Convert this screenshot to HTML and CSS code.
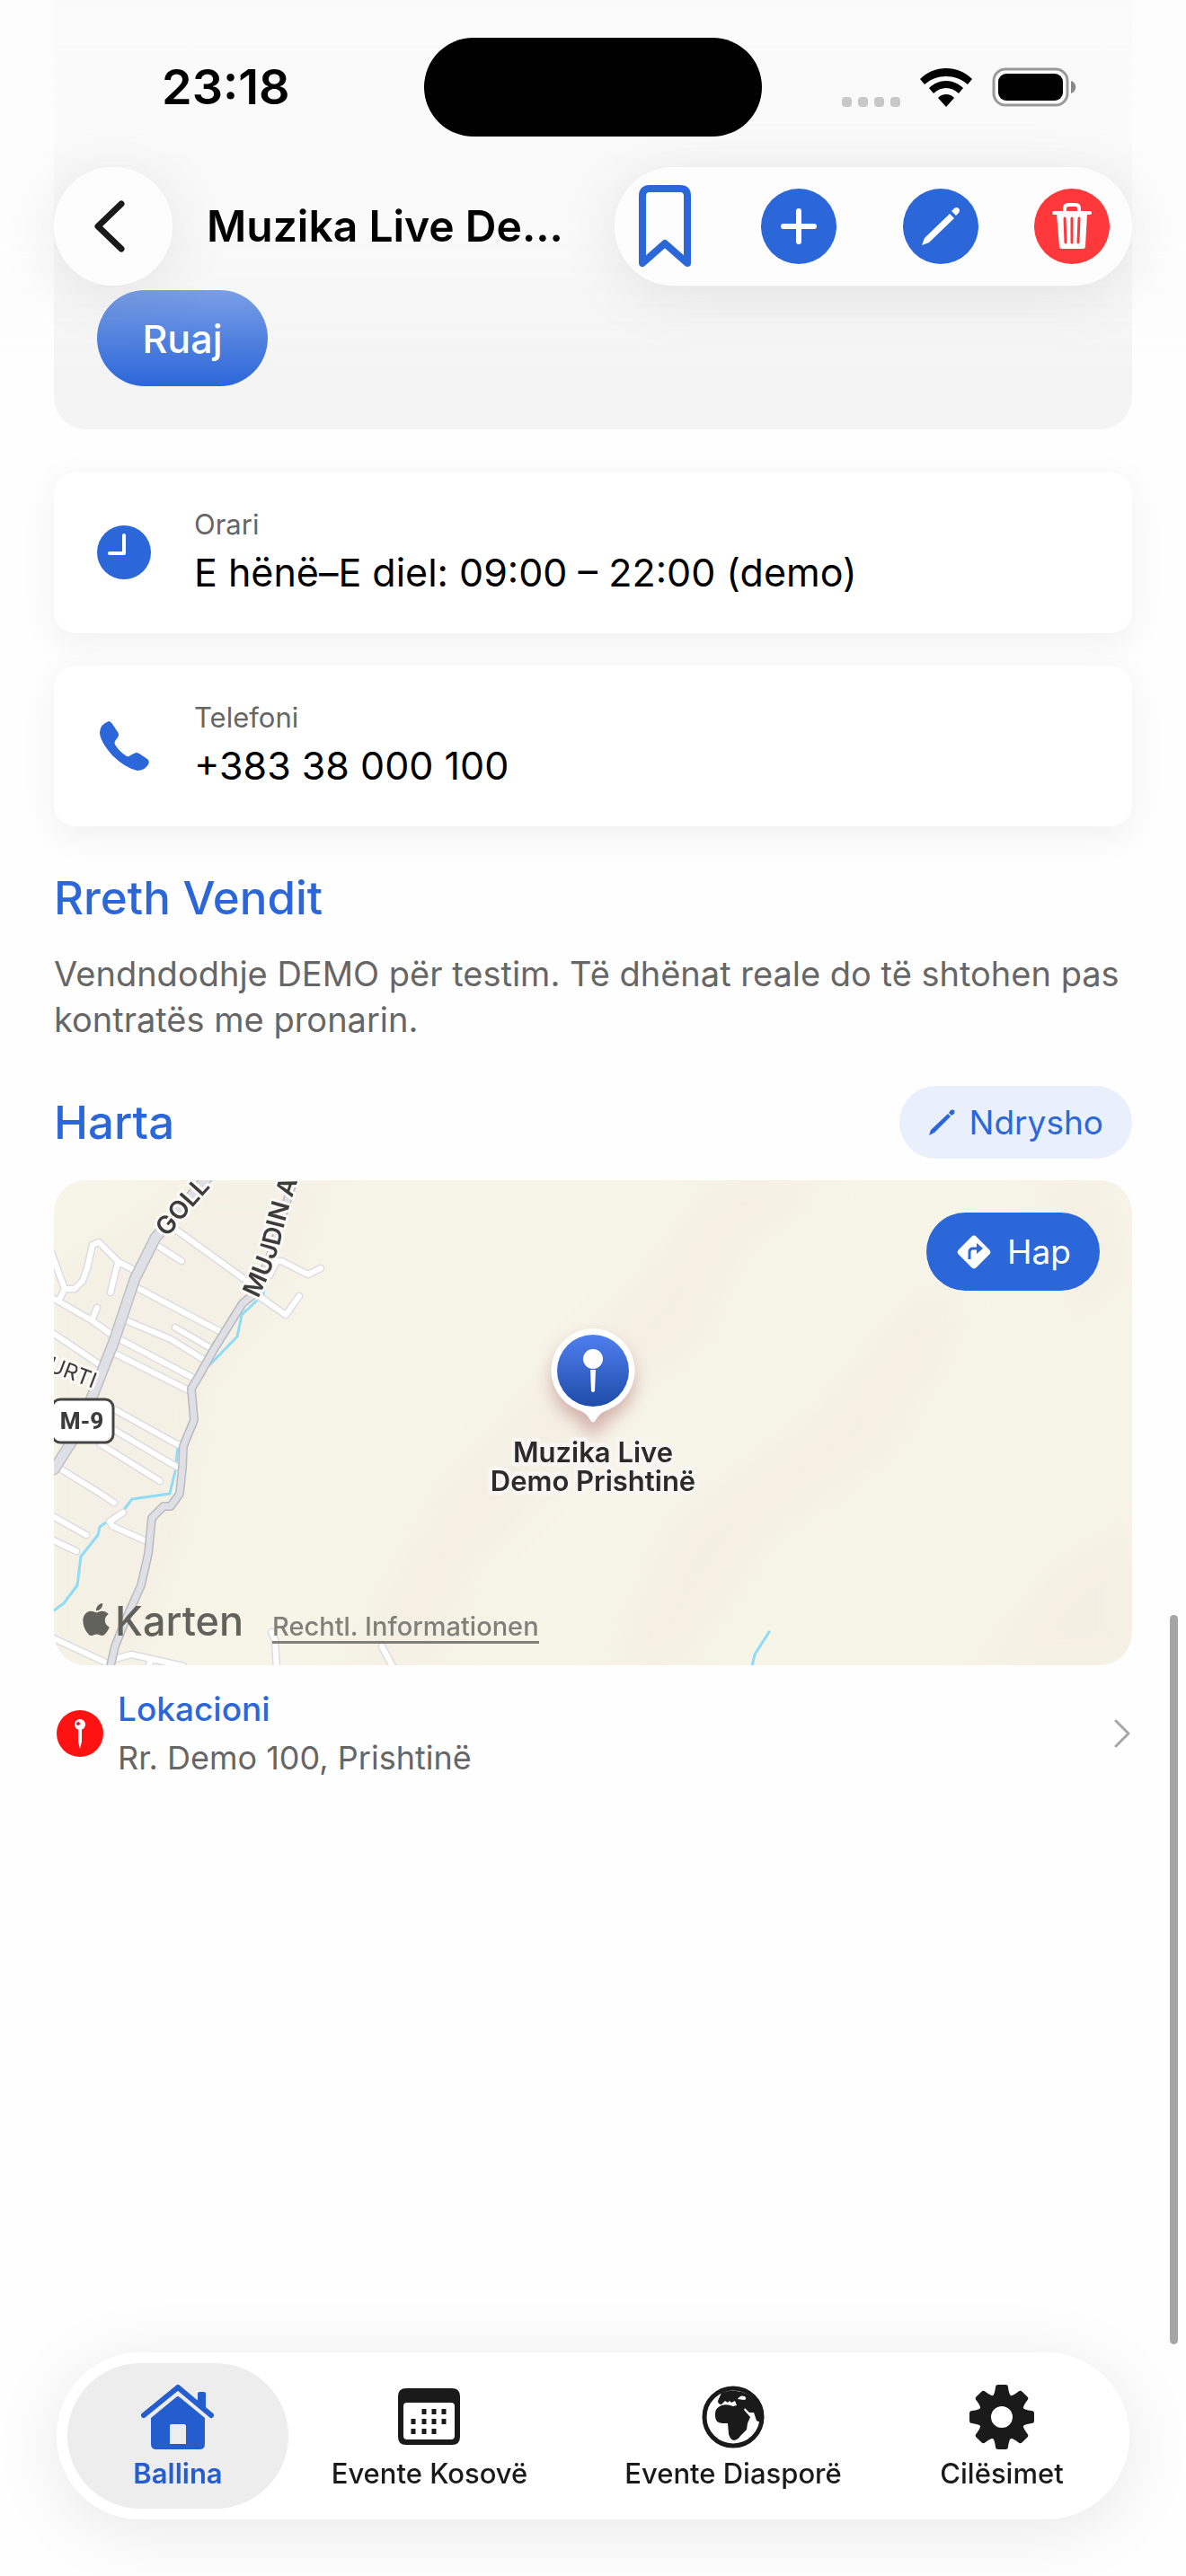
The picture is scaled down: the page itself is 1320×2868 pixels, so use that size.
FILE: index.html
```html
<!DOCTYPE html>
<html lang="sq">
<head>
<meta charset="utf-8">
<meta name="viewport" content="width=device-width, initial-scale=1">
<title>Muzika Live Demo Prishtinë</title>
<link rel="stylesheet" href="styles.css">
</head>
<body>
<header class="top">
  <div class="status">
    <span class="time">23:18</span>
    <span class="island"></span>
    <div class="indicators">
      <svg class="cell" width="65" height="11" viewBox="0 0 65 11" fill="#c8c8c8"><rect width="11" height="11" rx="4"/><rect x="18" width="11" height="11" rx="4"/><rect x="36" width="11" height="11" rx="4"/><rect x="54" width="11" height="11" rx="4"/></svg>
      <svg width="58" height="43" viewBox="0 0 58 43"><path d="M29 0C40 0 50 4 58 12l-5 6C46 12 38 9 29 9S12 12 5 18l-5-6C8 4 18 0 29 0Z"/><path d="M29 14c7 0 14 3 19 8l-5 6c-4-4-9-6-14-6s-10 2-14 6l-5-6c5-5 12-8 19-8Z"/><path d="M29 29c4 0 6 1 9 4l-9 10-9-10c3-3 5-4 9-4Z"/></svg>
      <svg width="94" height="44" viewBox="0 0 94 44"><rect x="2" y="2" width="82" height="40" rx="13" fill="none" stroke="#999" stroke-width="3"/><rect x="7" y="7" width="72" height="30" rx="9"/><path d="M88 15c7 2 7 12 0 14Z" fill="#888"/></svg>
    </div>
  </div>
  <div class="toolbar">
    <button class="back" aria-label="Kthehu"><svg width="34" height="58" viewBox="0 0 34 58"><path d="M30 4 4 29l26 25" fill="none" stroke="#1a1a1a" stroke-width="7" stroke-linecap="round" stroke-linejoin="round"/></svg></button>
    <h1 class="title">Muzika Live De...</h1>
    <div class="actions">
      <button class="plain" aria-label="Ruaj vendin"><svg width="58" height="92" viewBox="0 0 58 92"><path d="M4 87V12q0-8 8-8h34q8 0 8 8v75L29 65Z" fill="none" stroke="#2c67d9" stroke-width="8" stroke-linejoin="round"/></svg></button>
      <button class="plain" aria-label="Shto"><svg width="84" height="84" viewBox="0 0 84 84"><circle cx="42" cy="42" r="42" fill="#2c67d9"/><path d="M42 25v34M25 42h34" stroke="#fff" stroke-width="6" stroke-linecap="round"/></svg></button>
      <button class="plain" aria-label="Ndrysho vendin"><svg width="84" height="84" viewBox="0 0 84 84"><circle cx="42" cy="42" r="42" fill="#2c67d9"/><path d="m21 63 3-8 28-27 5 5-28 27Z" fill="#fff"/><path d="m54 25 3-3q3-2 5 0t0 5l-3 3Z" fill="#fff"/></svg></button>
      <button class="plain" aria-label="Fshi"><svg width="84" height="84" viewBox="0 0 84 84"><circle cx="42" cy="42" r="42" fill="#ff383c"/><path d="M34 26v-4q0-4 4-4h8q4 0 4 4v4" fill="none" stroke="#fff" stroke-width="4"/><path d="M22 27h40" stroke="#fff" stroke-width="4" stroke-linecap="round"/><path d="M25 28h34l-2 36q0 3-3 3H31q-3 0-3-3Z" fill="#fff"/><path d="m34 33 1 27m7-27v27m8-27-1 27" stroke="#ff383c" stroke-width="3" stroke-linecap="round"/></svg></button>
    </div>
  </div>
</header>

<main class="page">
  <section class="panel"><button class="save">Ruaj</button></section>

  <div class="cards">
    <section class="card">
      <svg width="60" height="60" viewBox="0 0 60 60"><circle cx="30" cy="30" r="30" fill="#2c67d9"/><path d="M30 11v20H14" fill="none" stroke="#fff" stroke-width="4" stroke-linecap="round" stroke-linejoin="round"/></svg>
      <div><div class="label">Orari</div><div class="value">E hënë–E diel: 09:00 – 22:00 (demo)</div></div>
    </section>
    <section class="card">
      <svg width="60" height="60" viewBox="-3 -3 60 60"><path d="M10 0q2 0 4 3l6 9q2 3 0 6l-3 4q-1 2 0 4 5 8 13 13 2 1 4-1l4-2q3-2 6 0l9 6q3 3 1 6-4 7-12 7-14-3-28-17Q0 22 0 12 1 3 10 0Z" fill="#2c67d9"/></svg>
      <div><div class="label">Telefoni</div><div class="value">+383 38 000 100</div></div>
    </section>
  </div>

  <section class="about">
    <h2>Rreth Vendit</h2>
    <p>Vendndodhje DEMO për testim. Të dhënat reale do të shtohen pas kontratës me pronarin.</p>
  </section>

  <section>
    <div class="map-head">
      <h2>Harta</h2>
      <button class="edit"><svg width="30" height="30" viewBox="0 0 30 30" fill="#2c67d9"><path d="m1 29 2-6L22 5l3 3L7 26Z"/><path d="m23 4 2-3q2-1 4 0 1 2 0 4l-3 2Z"/></svg>Ndrysho</button>
    </div>
    <div class="map">
      <svg class="map-canvas" viewBox="0 0 1200 540" preserveAspectRatio="xMidYMid slice">
        <defs>
          <filter id="soft" x="-30%" y="-30%" width="160%" height="160%"><feGaussianBlur stdDeviation="18"/></filter>
          <filter id="glow" x="-50%" y="-50%" width="200%" height="200%"><feGaussianBlur stdDeviation="9"/></filter>
          <linearGradient id="pin" x1="0" y1="0" x2="0" y2="1"><stop offset="0" stop-color="#4f7ff0"/><stop offset="1" stop-color="#1e4ca8"/></linearGradient>
          <path id="golle" d="M127 64 Q144 40 200 -20"/>
          <path id="mujdin" d="M227 132 Q247 92 254 60 T280 -24"/>
          <path id="urti" d="M-8 212 60 238"/>
        </defs>
        <rect width="1200" height="540" fill="#f7f4e8"/>
        <g fill="#f4efe3" filter="url(#soft)">
          <path d="M150 0H310L250 140 170 230 150 380 90 540H0V100Z" opacity=".8"/>
          <path d="M740 0h120L760 80 720 180 620 250 560 330 470 420 420 540H330L430 350 550 220 640 130Z"/>
          <path d="M960 130 1010 120 990 200 920 310 800 390 700 540H620L690 380 850 260Z"/>
          <path d="M1100 0h60l40 90-60 70Z"/>
          <path d="M1200 380 1120 430 1030 540H1200Z"/>
        </g>
        <g fill="none" stroke-linecap="round" stroke-linejoin="round">
          <path d="M235 116 233 127 209 150 204 174 173 206M138 297 135 324 129 349 87 355 77 368M58 381 51 386 49 395 30 419 26 451 11 471 0 479M796 503 780 528 777 541" stroke="#8edcf7" stroke-width="3"/>
          <g stroke="#dcdce1" stroke-width="9">
            <path id="lane" d="M133 53 220 116M117 74 142 90M93 120 188 170M80 156 130 177 167 200M135 164 173 186M73 177 153 219M68 193 150 234M0 171 52 206M-5 129 42 156 63 171M42 156 48 142M-3 80 12 121 23 121 32 112 37 98 43 72 50 69 72 91 89 100M71 92 63 125M12 121 7 131M67 255 137 294 142 294M67 278 133 317 140 320M52 294 118 335M5 320 52 349 67 359M-5 372 36 395M-5 399 25 413M77 370 62 380 65 385 103 402M-5 508 60 538M68 533 86 528 144 541M108 534 104 545M242 503 246 512 248 545M365 519 379 545M240 106 248 90 253 90 283 105 297 98M228 129 258 150 273 129"/>
          </g>
          <use href="#lane" stroke="#fff" stroke-width="6"/>
          <path d="M175-8 113 64 90 110 67 179 43 240 23 286 0 322" stroke="#bfc0c6" stroke-width="13"/>
          <path d="M175-8 113 64 90 110 67 179 43 240 23 286 0 322" stroke="#dfe0e6" stroke-width="10"/>
          <path d="M269-8 240 87 220 129 210 137 177 190 162 217 153 232 156 267 144 296 143 320 140 349 130 363 122 363 109 376 105 416 97 451 80 489 68 519 62 545" stroke="#b9bac0" stroke-width="10"/>
          <path d="M269-8 240 87 220 129 210 137 177 190 162 217 153 232 156 267 144 296 143 320 140 349 130 363 122 363 109 376 105 416 97 451 80 489 68 519 62 545" stroke="#dfe0e6" stroke-width="7"/>
        </g>
        <g class="street">
          <text><textPath href="#golle">GOLL</textPath></text>
          <text><textPath href="#mujdin">MUJDIN A</textPath></text>
          <text class="minor"><textPath href="#urti">URTI</textPath></text>
        </g>
        <rect x="-2" y="244" width="68" height="48" rx="9" fill="#fff" stroke="#454545" stroke-width="3"/>
        <text class="shield" x="31" y="277">M-9</text>
        <path d="M600 176a47 47 0 0 1 18 90l-18 20-18-20a47 47 0 0 1 18-90Z" fill="#a66" opacity=".45" filter="url(#glow)"/>
        <path d="M600 165a47 47 0 0 1 16 91q-9 3-13 11-3 5-6 0-4-8-13-11a47 47 0 0 1 16-91Z" fill="#fff"/>
        <circle cx="600" cy="212" r="40" fill="url(#pin)"/>
        <circle cx="600" cy="199" r="11" fill="#fff"/>
        <path d="M597 211h6l-1 24q-2 2-4 0Z" fill="#fff"/>
        <g class="place"><text x="600" y="314">Muzika Live</text><text x="600" y="346">Demo Prishtinë</text></g>
      </svg>
      <button class="open"><svg width="42" height="42" viewBox="0 0 42 42"><rect x="7" y="7" width="28" height="28" rx="4" fill="#fff" transform="rotate(45 21 21)"/><path d="M16 29v-8q0-4 4-4h5" fill="none" stroke="#2c67d9" stroke-width="3"/><path d="m24 11 7 6-7 6Z" fill="#2c67d9"/></svg>Hap</button>
      <div class="credit">
        <svg width="30" height="36" viewBox="2 0 20 24"><path fill="#62625c" d="M12.152 6.896c-.948 0-2.415-1.078-3.96-1.04-2.04.027-3.91 1.183-4.961 3.014-2.117 3.675-.546 9.103 1.519 12.09 1.013 1.454 2.208 3.09 3.792 3.039 1.52-.065 2.09-.987 3.935-.987 1.831 0 2.35.987 3.96.948 1.637-.026 2.676-1.48 3.676-2.948 1.156-1.688 1.636-3.325 1.662-3.415-.039-.013-3.182-1.221-3.22-4.857-.026-3.04 2.48-4.494 2.597-4.559-1.429-2.09-3.623-2.324-4.39-2.376-2-.156-3.675 1.09-4.61 1.09zM15.53 3.83c.843-1.012 1.4-2.427 1.245-3.83-1.207.052-2.662.805-3.532 1.818-.78.896-1.454 2.338-1.273 3.714 1.338.104 2.715-.688 3.559-1.701"/></svg>
        <span class="brand">Karten</span>
        <a class="legal" href="#legal">Rechtl. Informationen</a>
      </div>
    </div>
    <a class="location" href="#location">
      <svg width="52" height="52" viewBox="0 0 52 52"><circle cx="26" cy="26" r="26" fill="#ff1212"/><circle cx="26" cy="16" r="6" fill="#fff"/><circle cx="24" cy="15" r="2" fill="#ff1212"/><path d="M24 21h4v14l-2 8-2-8Z" fill="#fff"/></svg>
      <span class="address"><span class="address-label">Lokacioni</span><span>Rr. Demo 100, Prishtinë</span></span>
      <svg width="20" height="32" viewBox="0 0 20 32"><path d="m2 2 14 14L2 30" fill="none" stroke="#a8a8a8" stroke-width="3" stroke-linecap="round" stroke-linejoin="round"/></svg>
    </a>
  </section>
</main>

<div class="scroll-thumb"></div>

<nav class="tabs">
  <a class="tab active" href="#home"><svg width="82" height="72" viewBox="0 0 82 72" fill="#245dce"><path d="M3 34 41 3l37 31" fill="none" stroke="#245dce" stroke-width="6" stroke-linecap="round" stroke-linejoin="round"/><path d="M63 20V10q0-2 2-2h5q2 0 2 2v17Z"/><path fill-rule="evenodd" d="m39 14q2-2 4 0l28 23v29q0 6-6 6H17q-6 0-6-6V37ZM34 44q-2 0-2 2v20h18V46q0-2-2-2Z"/></svg>Ballina</a>
  <a class="tab" href="#kosove"><svg width="70" height="72" viewBox="0 -4 70 72" fill="#1a1a1a"><path fill-rule="evenodd" d="M9 0h51q9 0 9 9v45q0 9-9 9H9q-9 0-9-9V9q0-9 9-9Zm1 16q-4 0-4 4v33q0 4 4 4h49q4 0 4-4V20q0-4-4-4Z"/><path d="M29 23v6m11-6v6m11-6v6M17 34v6m12-6v6m11-6v6m11-6v6M17 45v6m12-6v6m11-6v6" stroke="#1a1a1a" stroke-width="5"/></svg>Evente Kosovë</a>
  <a class="tab" href="#diaspore"><svg width="70" height="72" viewBox="0 -1 70 72"><circle cx="35" cy="35" r="32" fill="#fff" stroke="#1a1a1a" stroke-width="5"/><path fill="#1a1a1a" d="M22 8 18 17q0 4 4 4l4-4 3 2 2-2 2 2 4-2 2 5-4 1q-7-3-13-1-7 3-7 9-1 11 8 11h6l1 12q2 7 6 7 5-1 7-5l7-7 1-7 3-7-7-8 1-2 5 5 5 0 3 9 4 2 3-7A34 34 0 0 0 22 8Z"/><path fill="#fff" d="M40 15q3-5 8-3 3 3-1 4Z"/></svg>Evente Diasporë</a>
  <a class="tab" href="#settings"><svg width="72" height="72" viewBox="-36 -36 72 72" fill="#1a1a1a"><g id="teeth"><path id="tooth" d="M-11-22q3-3 4-11 0-3 3-3h8q3 0 3 3 1 8 4 11Z"/><use href="#tooth" transform="rotate(90)"/><use href="#tooth" transform="rotate(180)"/><use href="#tooth" transform="rotate(270)"/></g><use href="#teeth" transform="rotate(45)"/><circle r="19" fill="none" stroke="#1a1a1a" stroke-width="14"/></svg>Cilësimet</a>
</nav>
</body>
</html>
```
FILE: styles.css
```css
* { box-sizing: border-box; }

body {
  margin: 0;
  min-height: 100vh;
  background: #fefefe;
  color: #000;
  font-family: "Inter", "Liberation Sans", sans-serif;
}

button {
  border: 0;
  padding: 0;
  font: inherit;
  cursor: pointer;
}

a { color: inherit; text-decoration: none; }
svg { display: block; flex: none; }

/* Floating header */
.top {
  position: fixed;
  inset: 0 0 auto;
  z-index: 2;
  height: 430px;
  background: linear-gradient(rgba(252, 252, 252, .8), rgba(252, 252, 252, .6) 260px, rgba(252, 252, 252, .35) 330px, rgba(252, 252, 252, 0));
}

.status {
  display: grid;
  grid-template-columns: 1fr 376px 1fr;
  align-items: center;
  padding: 42px 0 34px;
}

.time { padding-left: 180px; font-size: 54px; line-height: 64px; font-weight: 600; }
.island { height: 110px; border-radius: 55px; background: #000; }
.indicators {
  display: flex;
  justify-content: flex-end;
  align-items: flex-end;
  gap: 22px;
  padding-right: 122px;
}

.toolbar { display: flex; align-items: center; padding: 0 60px; gap: 38px; }

.back, .actions {
  height: 132px;
  border-radius: 66px;
  background: #fdfdfd;
  box-shadow: 0 10px 70px rgba(0, 0, 0, .09), inset 0 0 3px #fff;
}

.back {
  flex: none;
  width: 132px;
  display: flex;
  align-items: center;
  justify-content: center;
  padding-right: 8px;
}

.title {
  flex: 1;
  margin: 0;
  font-size: 48px;
  line-height: 60px;
  font-weight: 600;
  white-space: nowrap;
}

.actions {
  display: grid;
  grid-template-columns: 74px 96px 84px 84px;
  column-gap: 62px;
  align-items: center;
  justify-items: start;
  padding: 0 25px 0 27px;
}

.plain { background: none; }

/* Page content */
.page { padding: 0 60px 300px; }

.panel {
  padding: 323px 48px 48px;
  border-radius: 0 0 36px 36px;
  background: #f4f4f4;
}

.save {
  width: 190px;
  height: 107px;
  border-radius: 54px;
  background: #2c67d9;
  color: #fff;
  font-size: 43px;
  font-weight: 500;
}

.cards { display: grid; gap: 36px; margin-top: 48px; }

.card {
  display: flex;
  align-items: center;
  gap: 48px;
  padding: 35px 48px 36px;
  border-radius: 24px;
  background: #fff;
  box-shadow: 0 10px 40px rgba(0, 0, 0, .06);
}

.label { font-size: 31px; line-height: 45px; color: #666; }
.value { font-size: 43px; line-height: 63px; }

h2 {
  margin: 0;
  font-size: 51px;
  line-height: 72px;
  font-weight: 500;
  color: #2c67d9;
}

.about { margin: 44px 0 48px; }
.about p { margin: 23px 0 0; font-size: 38px; line-height: 51px; color: #666; }

.map-head { display: flex; align-items: center; justify-content: space-between; margin-bottom: 24px; }

.edit, .open {
  display: flex;
  align-items: center;
  gap: 16px;
  font-size: 37px;
}

.edit {
  height: 81px;
  padding: 0 32px;
  border-radius: 41px;
  background: #e9effb;
  color: #2c67d9;
}

.map {
  position: relative;
  height: 540px;
  border-radius: 36px;
  overflow: hidden;
}

.map-canvas { width: 100%; height: 100%; }

.street text {
  font-size: 28px;
  font-weight: 600;
  fill: #3c3c3c;
  stroke: #fbfaf6;
  stroke-width: 6px;
  stroke-linejoin: round;
  paint-order: stroke;
}
.street .minor { font-size: 24px; font-weight: 400; }

.shield { font-family: "Roboto", sans-serif; font-size: 26px; font-weight: 800; text-anchor: middle; fill: #3c3c3c; }

.place text {
  font-size: 31px;
  font-weight: 600;
  text-anchor: middle;
  fill: #2b2b2b;
  stroke: #f7f6f2;
  stroke-width: 9px;
  stroke-linejoin: round;
  paint-order: stroke;
}

.open {
  position: absolute;
  top: 36px;
  right: 36px;
  height: 87px;
  padding: 0 32px;
  border-radius: 44px;
  background: #2c67d9;
  color: #fff;
}

.credit {
  position: absolute;
  left: 32px;
  bottom: 22px;
  display: flex;
  align-items: baseline;
  gap: 6px;
  color: #62625c;
}

.brand { font-size: 45px; line-height: 54px; font-weight: 500; }
.legal { margin-left: 26px; border-bottom: 3px solid; font-size: 29px; line-height: 32px; font-weight: 500; color: #807f79; }

.location {
  display: flex;
  align-items: center;
  gap: 16px;
  margin-top: 22px;
  padding-left: 3px;
  font-size: 36px;
  line-height: 54px;
  color: #666;
}

.address { flex: 1; display: grid; }
.address-label { font-size: 37px; font-weight: 500; color: #2c67d9; }

.scroll-thumb {
  position: fixed;
  top: 62.7vh;
  right: 9px;
  width: 9px;
  height: 28.3vh;
  border-radius: 5px;
  background: #a5a5a5;
}

/* Tab bar */
.tabs {
  position: fixed;
  left: 63px;
  right: 63px;
  bottom: 63px;
  display: grid;
  grid-template-columns: 246fr 314fr 362fr 236fr;
  padding: 12px 24px 12px 12px;
  border-radius: 93px;
  background: #fff;
  box-shadow: 0 12px 80px rgba(0, 0, 0, .09);
}

.tab {
  display: flex;
  flex-direction: column;
  align-items: center;
  height: 162px;
  padding-top: 24px;
  gap: 9px;
  border-radius: 81px;
  font-size: 31px;
  line-height: 36px;
  font-weight: 500;
  color: #1a1a1a;
  white-space: nowrap;
}

.tab.active { background: #ededed; color: #245dce; font-weight: 600; }
```
